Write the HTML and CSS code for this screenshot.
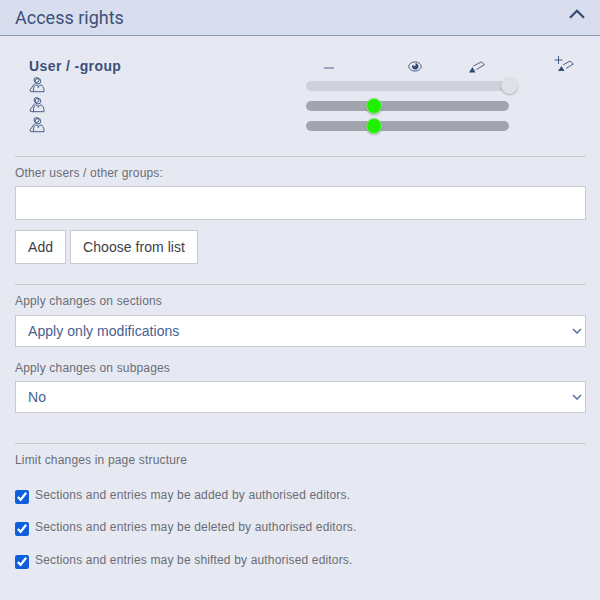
FILE: index.html
```html
<!DOCTYPE html>
<html lang="en">
<head>
  <meta charset="UTF-8">
  <title>Access rights</title>
  <link rel="stylesheet" href="styles.css">
</head>
<body>
  <svg class="defs" width="0" height="0">
    <symbol id="group" viewBox="0 0 16 16">
      <circle cx="7.5" cy="3" r="2.5"/>
      <circle cx="9" cy="4.2" r="2.8"/>
      <path d="M5.7 6.5 L1 13 Q0.6 14.7 3 14.7 H4.5"/>
      <path d="M4.5 14.7 H15 V12.5 Q14.7 9.2 12 7.8 L9.3 9.3 L6.8 7.8 Q4.5 9.5 4.5 12 Z"/>
      <path d="M9.3 9.5 V11"/>
    </symbol>
  </svg>

  <div class="panel-head">
    <h1>Access rights</h1>
    <svg class="collapse" width="16" height="10" viewBox="0 0 16 10"><path d="M1 8.7 L8 1.7 L15 8.7"/></svg>
  </div>

  <div class="panel-body">
    <!-- rights table -->
    <div class="rights">
      <div class="rights-row rights-head">
        <span class="user-col">User / -group</span>
        <div class="rights-icons">
          <svg class="icon minus" width="10" height="4" viewBox="0 0 10 4"><path d="M0 2 H10"/></svg>
          <svg class="icon eye" width="14" height="11" viewBox="0 0 14 11">
            <ellipse cx="7" cy="5.5" rx="6.2" ry="4.6"/>
            <path class="solid" d="M7.5 2.2 A3.2 3.2 0 1 1 4.4 4 L7.5 5.2 Z"/>
          </svg>
          <svg class="icon pen" width="16" height="12" viewBox="0 0 16 12">
            <path class="solid" d="M0 11.5 L3.5 6 L6.5 11.5 Z"/>
            <path d="M4.5 5 L12.5 0.8 L15.3 3.8 L7.5 8.5"/>
          </svg>
          <svg class="icon plus-pen" width="20" height="16" viewBox="0 0 20 16">
            <path d="M4.5 0 V8 M0.5 4 H8.5"/>
            <path class="solid" d="M4 15 L7.5 10 L10.5 15 Z"/>
            <path d="M9 9 L16 5 L19.3 8 L12 12.5"/>
          </svg>
        </div>
      </div>
      <div class="rights-row">
        <svg class="icon user-icon" width="16" height="16"><use href="#group"/></svg>
        <div class="track track-off"><span class="thumb thumb-off" style="left: 203px"></span></div>
      </div>
      <div class="rights-row">
        <svg class="icon user-icon" width="16" height="16"><use href="#group"/></svg>
        <div class="track"><span class="thumb" style="left: 68px"></span></div>
      </div>
      <div class="rights-row">
        <svg class="icon user-icon" width="16" height="16"><use href="#group"/></svg>
        <div class="track"><span class="thumb" style="left: 68px"></span></div>
      </div>
    </div>

    <section class="block block-users">
      <label class="field-label" for="otherUsers">Other users / other groups:</label>
      <input class="text-input" type="text" id="otherUsers">
      <div class="buttons">
        <button class="btn">Add</button>
        <button class="btn">Choose from list</button>
      </div>
    </section>

    <section class="block block-apply">
      <label class="field-label" for="applySections">Apply changes on sections</label>
      <div class="select-wrap">
        <select id="applySections"><option>Apply only modifications</option></select>
        <svg class="chevron" width="10" height="6" viewBox="0 0 10 6"><path d="M1 1 L5 5 L9 1"/></svg>
      </div>
      <label class="field-label label-sub" for="applySubpages">Apply changes on subpages</label>
      <div class="select-wrap select-sub">
        <select id="applySubpages"><option>No</option></select>
        <svg class="chevron" width="10" height="6" viewBox="0 0 10 6"><path d="M1 1 L5 5 L9 1"/></svg>
      </div>
    </section>

    <section class="block block-limit">
      <div class="field-label">Limit changes in page structure</div>
      <label class="check"><input type="checkbox" checked><span>Sections and entries may be added by authorised editors.</span></label>
      <label class="check"><input type="checkbox" checked><span>Sections and entries may be deleted by authorised editors.</span></label>
      <label class="check"><input type="checkbox" checked><span>Sections and entries may be shifted by authorised editors.</span></label>
    </section>
  </div>
</body>
</html>
```

FILE: styles.css
```css
html, body {
  margin: 0;
  padding: 0;
}
body {
  height: 600px;
  overflow: hidden;
  background: #e6e9f2;
  font-family: "Liberation Sans", Arial, sans-serif;
  color: #6a6d75;
}
.defs {
  position: absolute;
}
.panel-head {
  display: flex;
  align-items: center;
  justify-content: space-between;
  height: 35px;
  padding: 0 15px;
  background: #d8deed;
  border-bottom: 1px solid #8d9ab6;
}
.panel-head h1 {
  margin: 0;
  font-family: Roboto, sans-serif;
  font-size: 18px;
  font-weight: 400;
  color: #3b5079;
}
.collapse {
  margin-bottom: 8px;
}
.collapse path {
  fill: none;
  stroke: #344a73;
  stroke-width: 2.2;
}
.panel-body {
  padding: 0 14px 0 15px;
}
.icon {
  fill: none;
  stroke: #3b5079;
  stroke-width: 0.9;
}
.icon .solid {
  fill: #344a73;
  stroke: none;
}
.rights {
  padding: 19px 0 20px 14px;
  display: flex;
  flex-direction: column;
}
.rights-row {
  display: flex;
  align-items: center;
  height: 20px;
}
.rights-head {
  height: 21px;
  justify-content: space-between;
}
.user-col {
  font-size: 14px;
  font-weight: 700;
  letter-spacing: 0.4px;
  color: #3b5079;
}
.rights-icons {
  position: relative;
  width: 277px;
  height: 21px;
}
.rights-icons svg {
  position: absolute;
}
.minus { left: 15px; top: 11px; }
.eye { left: 99px; top: 6px; }
.pen { left: 160px; top: 6px; }
.plus-pen { left: 245px; top: 1px; }
.user-icon {
  margin-right: 261px;
  margin-bottom: 2px;
  flex: none;
}
.track {
  position: relative;
  width: 203px;
  height: 10px;
  border-radius: 5px;
  background: #a1a5ae;
}
.track-off {
  background: #cdd1da;
}
.thumb {
  position: absolute;
  top: -3px;
  width: 16px;
  height: 16px;
  margin-left: -8px;
  box-sizing: border-box;
  border: 1px solid #9be08e;
  border-radius: 50%;
  background: #1ef000;
  box-shadow: 0 1px 2px rgba(0, 0, 0, 0.25);
}
.thumb-off {
  top: -4px;
  width: 17px;
  height: 17px;
  background: #dfe1e6;
  border-color: #dfe1e6;
}
.block {
  border-top: 1px solid #c8cad0;
}
.field-label {
  display: block;
  font-size: 12px;
  line-height: 14px;
  letter-spacing: 0.17px;
  color: #6a6d75;
}
.block-users {
  padding-top: 9px;
  padding-bottom: 20px;
}
.text-input {
  display: block;
  box-sizing: border-box;
  width: 571px;
  height: 34px;
  margin-top: 6px;
  border: 1px solid #c8cad0;
  background: #fff;
  outline: none;
}
.buttons {
  display: flex;
  gap: 4px;
  margin-top: 10px;
}
.btn {
  height: 34px;
  padding: 0 12px;
  border: 1px solid #c8cad0;
  background: #fff;
  font-family: "Liberation Sans", Arial, sans-serif;
  font-size: 14px;
  letter-spacing: 0.05px;
  color: #3c3f46;
}
.block-apply {
  padding-top: 9px;
  padding-bottom: 30px;
}
.select-wrap {
  position: relative;
  width: 571px;
  height: 32px;
  margin-top: 7px;
}
.select-sub {
  margin-top: 6px;
}
.select-wrap select {
  display: block;
  width: 100%;
  height: 100%;
  box-sizing: border-box;
  padding: 0 12px;
  appearance: none;
  border: 1px solid #c8cad0;
  border-radius: 0;
  background: #fff;
  font-family: "Liberation Sans", Arial, sans-serif;
  font-size: 14px;
  letter-spacing: 0.05px;
  color: #46618f;
}
.chevron {
  position: absolute;
  right: 4px;
  top: 13px;
}
.chevron path {
  fill: none;
  stroke: #5a74a3;
  stroke-width: 1.6;
}
.label-sub {
  margin-top: 14px;
}
.block-limit {
  padding-top: 9px;
}
.check {
  display: flex;
  align-items: flex-start;
  margin-top: 14px;
  height: 18px;
  font-size: 12px;
  letter-spacing: 0.16px;
  color: #6a6d75;
}
.block-limit .field-label + .check {
  margin-top: 21px;
}
.block-limit .check:last-child {
  margin-top: 15px;
}
.check input {
  width: 14px;
  height: 14px;
  margin: 2px 6px 0 0;
  accent-color: #0f5fdc;
  flex: none;
}
.check span {
  line-height: 14px;
}
```
